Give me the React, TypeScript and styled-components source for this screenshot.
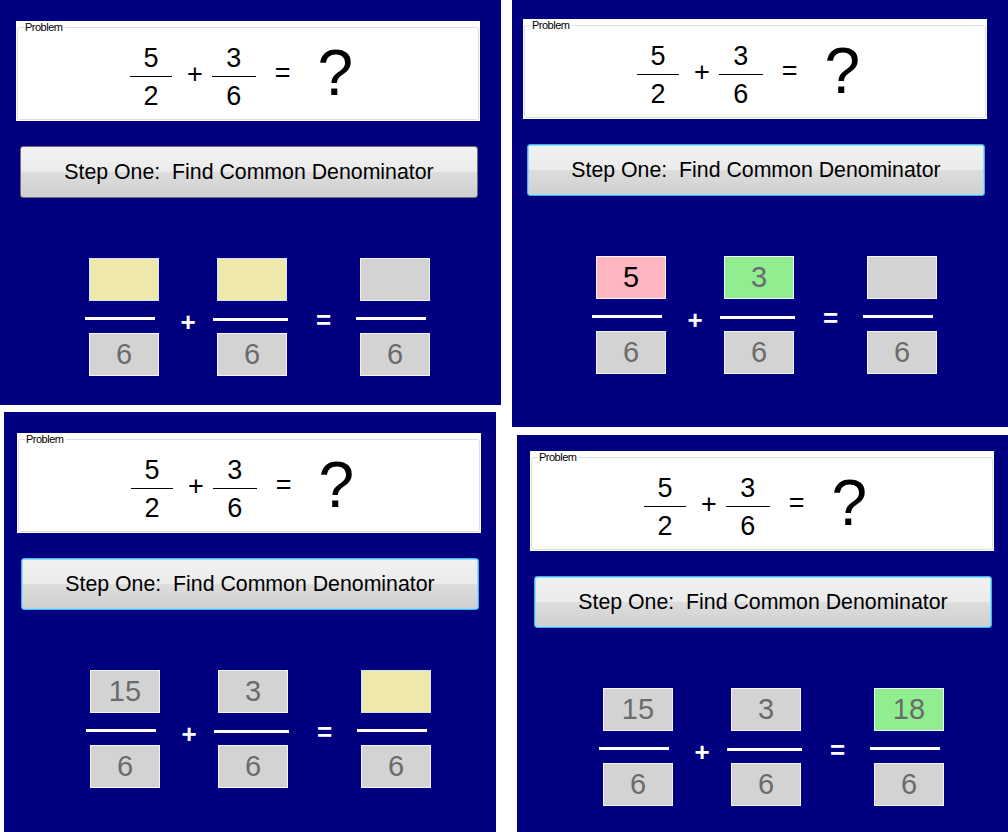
import React from "react";
import styled, { createGlobalStyle, css } from "styled-components";

const Global = createGlobalStyle`
  html, body { margin: 0; padding: 0; background: #ffffff; }
  body { font-family: "Liberation Sans", Arial, sans-serif; }
`;

const Page = styled.div`
  display: flex;
  gap: 11px;
  width: 1008px;
  height: 832px;
  overflow: hidden;
  background: #ffffff;
`;

const Column = styled.div<{ $width: number }>`
  display: flex;
  flex-direction: column;
  width: ${(p) => p.$width}px;
  flex: none;
`;

const Panel = styled.div<{ $w: number; $h: number; $pt: number; $pl: number; $mt: number; $ml: number }>`
  box-sizing: border-box;
  width: ${(p) => p.$w}px;
  height: ${(p) => p.$h}px;
  margin-top: ${(p) => p.$mt}px;
  margin-left: ${(p) => p.$ml}px;
  padding-top: ${(p) => p.$pt}px;
  padding-left: ${(p) => p.$pl}px;
  background: #000080;
  overflow: hidden;
  flex: none;
`;

const GroupWrap = styled.div`
  box-sizing: border-box;
  width: 464px;
  height: 100px;
  background: #ffffff;
  padding: 0 1px 1px 1px;
`;

const Frame = styled.fieldset`
  box-sizing: border-box;
  margin: 0;
  height: 99px;
  border: 1px solid #d5dfe5;
  border-radius: 3px;
  padding: 0;
  min-width: 0;
`;

const Legend = styled.legend`
  font-family: "Liberation Sans", Arial, sans-serif;
  font-size: 11px;
  letter-spacing: -0.5px;
  line-height: 13px;
  color: #000000;
  padding: 0 3px 0 1px;
  margin-left: 6px;
`;

const ProblemRow = styled.div`
  display: flex;
  align-items: flex-start;
  height: 70px;
  padding-top: 8px;
  padding-left: 112px;
  font-family: "Liberation Sans", Arial, sans-serif;
  color: #000000;
`;

const PFraction = styled.div<{ $w: number }>`
  display: flex;
  flex-direction: column;
  align-items: center;
  width: ${(p) => p.$w}px;
`;

const PDigit = styled.div`
  font-size: 27px;
  line-height: 32px;
`;

const PBar = styled.div`
  align-self: stretch;
  height: 1px;
  background: #000000;
  margin: 2px 0 3px 0;
`;

const POp = styled.div<{ $ml: number; $mt: number }>`
  font-size: 27px;
  line-height: 70px;
  margin-left: ${(p) => p.$ml}px;
  margin-top: ${(p) => p.$mt}px;
`;

const Question = styled.div`
  font-size: 64px;
  line-height: 70px;
  margin-left: 27px;
  margin-top: -4px;
`;

const StepButton = styled.div<{ $focus: boolean }>`
  box-sizing: border-box;
  width: 458px;
  height: 52px;
  margin-top: 25px;
  margin-left: 4px;
  display: flex;
  align-items: center;
  justify-content: center;
  border-radius: 3px;
  border: 1px solid #707070;
  background: linear-gradient(#f2f2f2 0%, #ebebeb 49%, #dddddd 51%, #cfcfcf 100%);
  font-family: "Liberation Sans", Arial, sans-serif;
  font-size: 21.3px;
  color: #000000;
  white-space: pre;
  ${(p) =>
    p.$focus &&
    css`
      border-color: #3cb4e6;
      box-shadow: inset 0 0 0 1px #9bdcf5;
    `}
`;

const WorkRow = styled.div`
  display: grid;
  grid-template-columns: 70px 58px 70px 73px 70px;
  margin-top: 60px;
  margin-left: 73px;
  height: 118px;
`;

const FracCol = styled.div`
  display: flex;
  flex-direction: column;
  align-items: flex-start;
`;

const fills: Record<string, string> = {
  yellow: "#eee8aa",
  gray: "#d3d3d3",
  pink: "#ffb6c1",
  green: "#90ee90",
};

const NumBox = styled.div<{ $fill: string; $ink: string }>`
  box-sizing: border-box;
  width: 70px;
  height: 43px;
  background: ${(p) => fills[p.$fill]};
  border: 1px solid ${(p) => (p.$fill === "yellow" ? "#cfe3f3" : "#f2f4f6")};
  font-family: "Liberation Sans", Arial, sans-serif;
  font-size: 29px;
  line-height: 41px;
  text-align: center;
  color: ${(p) => p.$ink};
`;

const WBar = styled.div<{ $w: number; $dy: number }>`
  width: ${(p) => p.$w}px;
  height: 3px;
  background: #ffffff;
  margin-left: -4px;
  margin-top: ${(p) => 16 + p.$dy}px;
  margin-bottom: ${(p) => 13 - p.$dy}px;
`;

const WOp = styled.div<{ $pt: number }>`
  font-family: "Liberation Sans", Arial, sans-serif;
  font-weight: bold;
  font-size: 26px;
  line-height: 118px;
  padding-top: ${(p) => p.$pt}px;
  color: #ffffff;
  text-align: center;
`;

type Cell = { fill: string; text: string; ink?: string };

type PanelData = {
  w: number;
  h: number;
  pt: number;
  pl: number;
  mt: number;
  ml: number;
  focus: boolean;
  nums: Cell[];
};

const GRAY_INK = "#6b6b6b";

const Fraction: React.FC<{ cell: Cell; barW: number; dy: number }> = ({ cell, barW, dy }) => (
  <FracCol>
    <NumBox $fill={cell.fill} $ink={cell.ink ?? GRAY_INK}>
      {cell.text}
    </NumBox>
    <WBar $w={barW} $dy={dy} />
    <NumBox $fill="gray" $ink={GRAY_INK}>
      6
    </NumBox>
  </FracCol>
);

const Screen: React.FC<{ d: PanelData }> = ({ d }) => (
  <Panel $w={d.w} $h={d.h} $pt={d.pt} $pl={d.pl} $mt={d.mt} $ml={d.ml}>
    <GroupWrap>
      <Frame>
        <Legend>Problem</Legend>
        <ProblemRow>
          <PFraction $w={42}>
            <PDigit>5</PDigit>
            <PBar />
            <PDigit>2</PDigit>
          </PFraction>
          <POp $ml={15} $mt={-3}>+</POp>
          <PFraction $w={44} style={{ marginLeft: 9 }}>
            <PDigit>3</PDigit>
            <PBar />
            <PDigit>6</PDigit>
          </PFraction>
          <POp $ml={19} $mt={-4}>=</POp>
          <Question>?</Question>
        </ProblemRow>
      </Frame>
    </GroupWrap>
    <StepButton $focus={d.focus}>{"Step One:  Find Common Denominator"}</StepButton>
    <WorkRow>
      <Fraction cell={d.nums[0]} barW={70} dy={0} />
      <WOp $pt={5}>+</WOp>
      <Fraction cell={d.nums[1]} barW={75} dy={1} />
      <WOp $pt={3}>=</WOp>
      <Fraction cell={d.nums[2]} barW={70} dy={0} />
    </WorkRow>
  </Panel>
);

const P1: PanelData = {
  w: 501, h: 405, pt: 21, pl: 16, mt: 0, ml: 0, focus: false,
  nums: [
    { fill: "yellow", text: "" },
    { fill: "yellow", text: "" },
    { fill: "gray", text: "" },
  ],
};
const P2: PanelData = {
  w: 496, h: 427, pt: 19, pl: 11, mt: 0, ml: 0, focus: true,
  nums: [
    { fill: "pink", text: "5", ink: "#000000" },
    { fill: "green", text: "3" },
    { fill: "gray", text: "" },
  ],
};
const P3: PanelData = {
  w: 492, h: 420, pt: 21, pl: 13, mt: 7, ml: 4, focus: true,
  nums: [
    { fill: "gray", text: "15" },
    { fill: "gray", text: "3" },
    { fill: "yellow", text: "" },
  ],
};
const P4: PanelData = {
  w: 491, h: 397, pt: 16, pl: 13, mt: 8, ml: 5, focus: true,
  nums: [
    { fill: "gray", text: "15" },
    { fill: "gray", text: "3" },
    { fill: "green", text: "18" },
  ],
};

export default function App() {
  return (
    <>
      <Global />
      <Page>
        <Column $width={501}>
          <Screen d={P1} />
          <Screen d={P3} />
        </Column>
        <Column $width={496}>
          <Screen d={P2} />
          <Screen d={P4} />
        </Column>
      </Page>
    </>
  );
}
